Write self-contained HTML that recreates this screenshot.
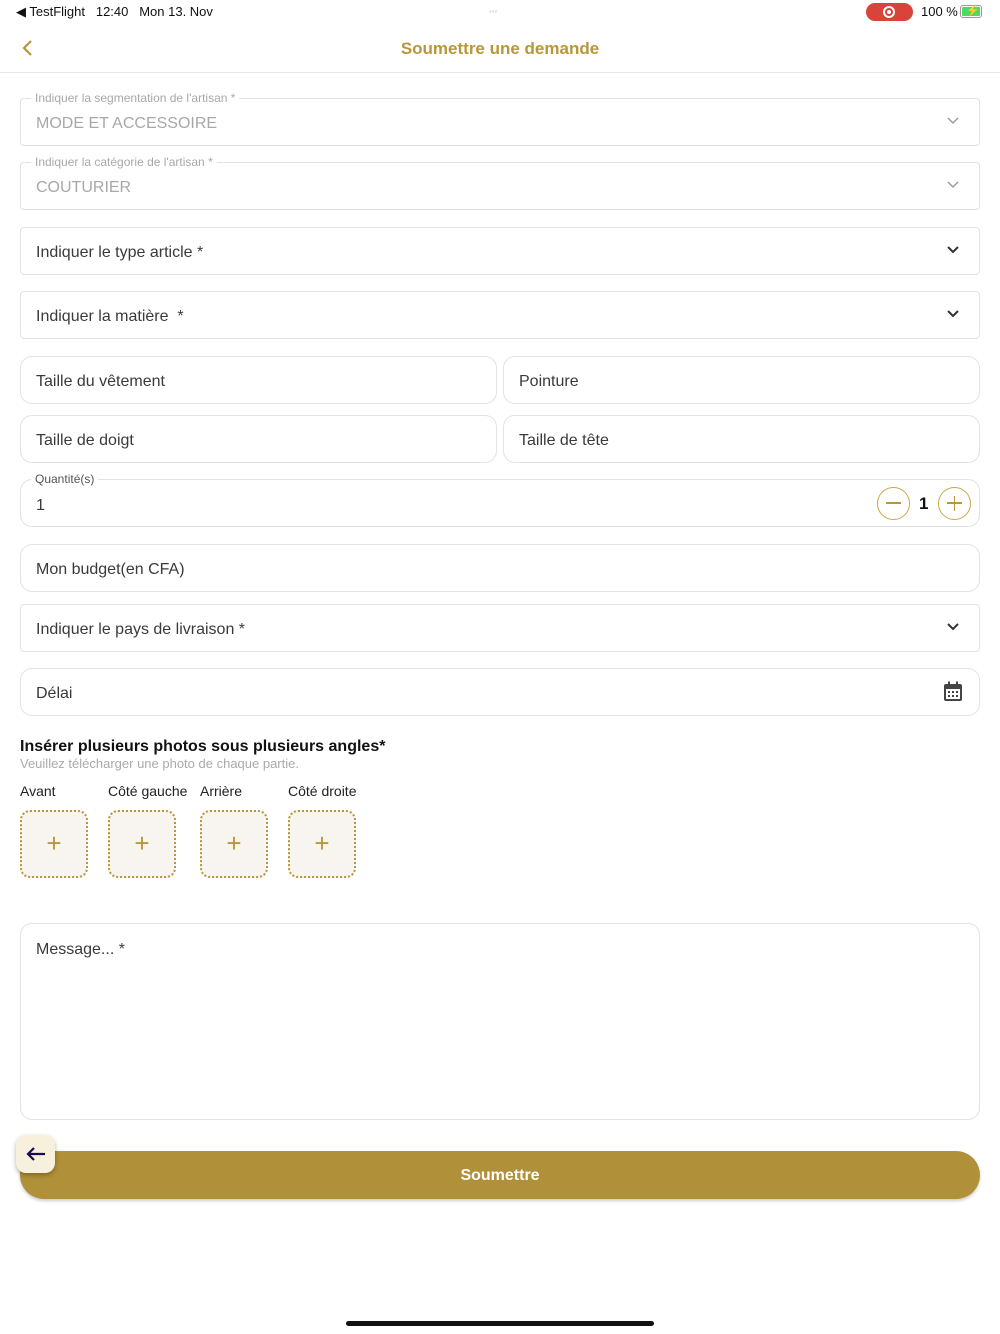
<!DOCTYPE html>
<html><head><meta charset="utf-8"><style>
*{box-sizing:border-box;margin:0;padding:0}
body{width:1000px;height:1334px;background:#fff;font-family:"Liberation Sans",sans-serif;position:relative;overflow:hidden;color:#333}
.a{position:absolute}
.f{position:absolute;left:20px;width:960px;height:48px;border:1px solid #e3e3e3;border-radius:4px;background:#fff}
.r{border-radius:12px}
.t{position:absolute;left:15px;top:16px;font-size:16px;color:#3a3a3a}
.g{color:#a8a8a8}
.lab{position:absolute;left:10px;top:-8px;background:#fff;padding:0 4px;font-size:12px;color:#a8a8a8;line-height:14px}
.ch{position:absolute;right:20px;top:14px}
.box{position:absolute;top:810px;width:68px;height:68px;border:2px dotted #b8963a;border-radius:10px;background:#f8f5f1}
.box:after{content:"+";position:absolute;left:0;right:0;top:16px;text-align:center;font-size:26px;color:#b8963a}
.pl{position:absolute;top:783px;font-size:14px;color:#222}
</style></head><body>
<div class="a" style="left:16px;top:4px;font-size:13px;color:#111">◀ TestFlight&nbsp;&nbsp;&nbsp;12:40&nbsp;&nbsp;&nbsp;Mon 13. Nov</div>
<div class="a" style="left:489px;top:10px;width:22px;height:4px;color:#ddd;font-size:8px;line-height:4px">•••</div>
<div class="a" style="left:866px;top:3px;width:47px;height:18px;border-radius:9px;background:#d9443a"></div>
<div class="a" style="left:883px;top:6px;width:12px;height:12px;border-radius:50%;border:2px solid #fff"></div>
<div class="a" style="left:887px;top:10px;width:4px;height:4px;border-radius:50%;background:#fff"></div>
<div class="a" style="left:921px;top:4px;font-size:13px;color:#111">100 %</div>
<div class="a" style="left:960px;top:5px;width:22px;height:13px;border:1px solid #999;border-radius:3px;padding:1px"><div style="width:100%;height:100%;background:#4cd964;border-radius:1px"></div></div>
<div class="a" style="left:966px;top:4px;font-size:11px;color:#111">⚡</div>

<svg class="a" style="left:20px;top:39px" width="14" height="18"><path d="M11 2L4 9l7 7" stroke="#b8963a" stroke-width="2.2" fill="none"/></svg>
<div class="a" style="left:0;width:1000px;top:39px;text-align:center;font-size:17px;font-weight:bold;color:#b8963a">Soumettre une demande</div>
<div class="a" style="left:0;top:72px;width:1000px;height:1px;background:#e8e8e8"></div>

<div class="f" style="top:98px"><div class="lab">Indiquer la segmentation de l'artisan *</div><div class="t g">MODE ET ACCESSOIRE</div><svg class="ch" width="12" height="16"><path d="M1 5l5 5 5-5" stroke="#999" stroke-width="1.4" fill="none"/></svg></div>
<div class="f" style="top:162px"><div class="lab">Indiquer la catégorie de l'artisan *</div><div class="t g">COUTURIER</div><svg class="ch" width="12" height="16"><path d="M1 5l5 5 5-5" stroke="#999" stroke-width="1.4" fill="none"/></svg></div>
<div class="f" style="top:227px"><div class="t">Indiquer le type article *</div><svg class="ch" width="12" height="16"><path d="M1 5l5 5 5-5" stroke="#333" stroke-width="2" fill="none"/></svg></div>
<div class="f" style="top:291px"><div class="t">Indiquer la matière&nbsp; *</div><svg class="ch" width="12" height="16"><path d="M1 5l5 5 5-5" stroke="#333" stroke-width="2" fill="none"/></svg></div>
<div class="f r" style="top:356px;width:477px"><div class="t">Taille du vêtement</div></div>
<div class="f r" style="top:356px;left:503px;width:477px"><div class="t">Pointure</div></div>
<div class="f r" style="top:415px;width:477px"><div class="t">Taille de doigt</div></div>
<div class="f r" style="top:415px;left:503px;width:477px"><div class="t">Taille de tête</div></div>
<div class="f r" style="top:479px"><div class="lab" style="color:#555">Quantité(s)</div><div class="t" style="top:17px">1</div>
<div class="a" style="left:856px;top:7px;width:33px;height:33px;border:1.5px solid #c9a64a;border-radius:50%"></div><div class="a" style="left:865px;top:22px;width:15px;height:1.6px;background:#b8963a"></div>
<div class="a" style="left:898px;top:14px;font-size:17px;font-weight:bold;color:#111">1</div>
<div class="a" style="left:917px;top:7px;width:33px;height:33px;border:1.5px solid #c9a64a;border-radius:50%"></div><div class="a" style="left:926px;top:22px;width:15px;height:1.6px;background:#b8963a"></div><div class="a" style="left:932.7px;top:15.5px;width:1.6px;height:15px;background:#b8963a"></div>
</div>
<div class="f r" style="top:544px"><div class="t">Mon budget(en CFA)</div></div>
<div class="f" style="top:604px"><div class="t">Indiquer le pays de livraison *</div><svg class="ch" width="12" height="16"><path d="M1 5l5 5 5-5" stroke="#333" stroke-width="2" fill="none"/></svg></div>
<div class="f r" style="top:668px"><div class="t">Délai</div>
<svg class="a" style="left:922px;top:12px" width="20" height="22"><rect x="1" y="3" width="18" height="17" rx="2" fill="#444"/><rect x="5" y="0.5" width="2" height="5" fill="#444"/><rect x="13" y="0.5" width="2" height="5" fill="#444"/><rect x="3" y="8" width="14" height="10" fill="#fff"/><g fill="#444"><rect x="5" y="10" width="2" height="2"/><rect x="9" y="10" width="2" height="2"/><rect x="13" y="10" width="2" height="2"/><rect x="5" y="14" width="2" height="2"/><rect x="9" y="14" width="2" height="2"/><rect x="13" y="14" width="2" height="2"/></g></svg></div>

<div class="a" style="left:20px;top:738px;font-size:16px;font-weight:bold;color:#111">Insérer plusieurs photos sous plusieurs angles*</div>
<div class="a" style="left:20px;top:756px;font-size:13px;color:#aaa">Veuillez télécharger une photo de chaque partie.</div>
<div class="pl" style="left:20px">Avant</div><div class="pl" style="left:108px">Côté gauche</div><div class="pl" style="left:200px">Arrière</div><div class="pl" style="left:288px">Côté droite</div>
<div class="box" style="left:20px"></div><div class="box" style="left:108px"></div><div class="box" style="left:200px"></div><div class="box" style="left:288px"></div>

<div class="f r" style="top:923px;height:197px"><div class="t" style="top:17px">Message... *</div></div>

<div class="a" style="left:20px;top:1151px;width:960px;height:48px;background:#b09038;border-radius:6px 24px 24px 24px;box-shadow:0 2px 3px rgba(0,0,0,.2);color:#fff;font-weight:bold;font-size:16px;text-align:center;line-height:50px">Soumettre</div>
<div class="a" style="left:16px;top:1135px;width:39px;height:38px;background:#f7f0dc;border-radius:10px;box-shadow:0 2px 5px rgba(0,0,0,.3)"></div>
<svg class="a" style="left:25px;top:1146px" width="22" height="16"><path d="M20 8H3M9 2L3 8l6 6" stroke="#1d0a55" stroke-width="2.2" fill="none"/></svg>
<div class="a" style="left:346px;top:1321px;width:308px;height:5px;border-radius:3px;background:#111"></div>
</body></html>
